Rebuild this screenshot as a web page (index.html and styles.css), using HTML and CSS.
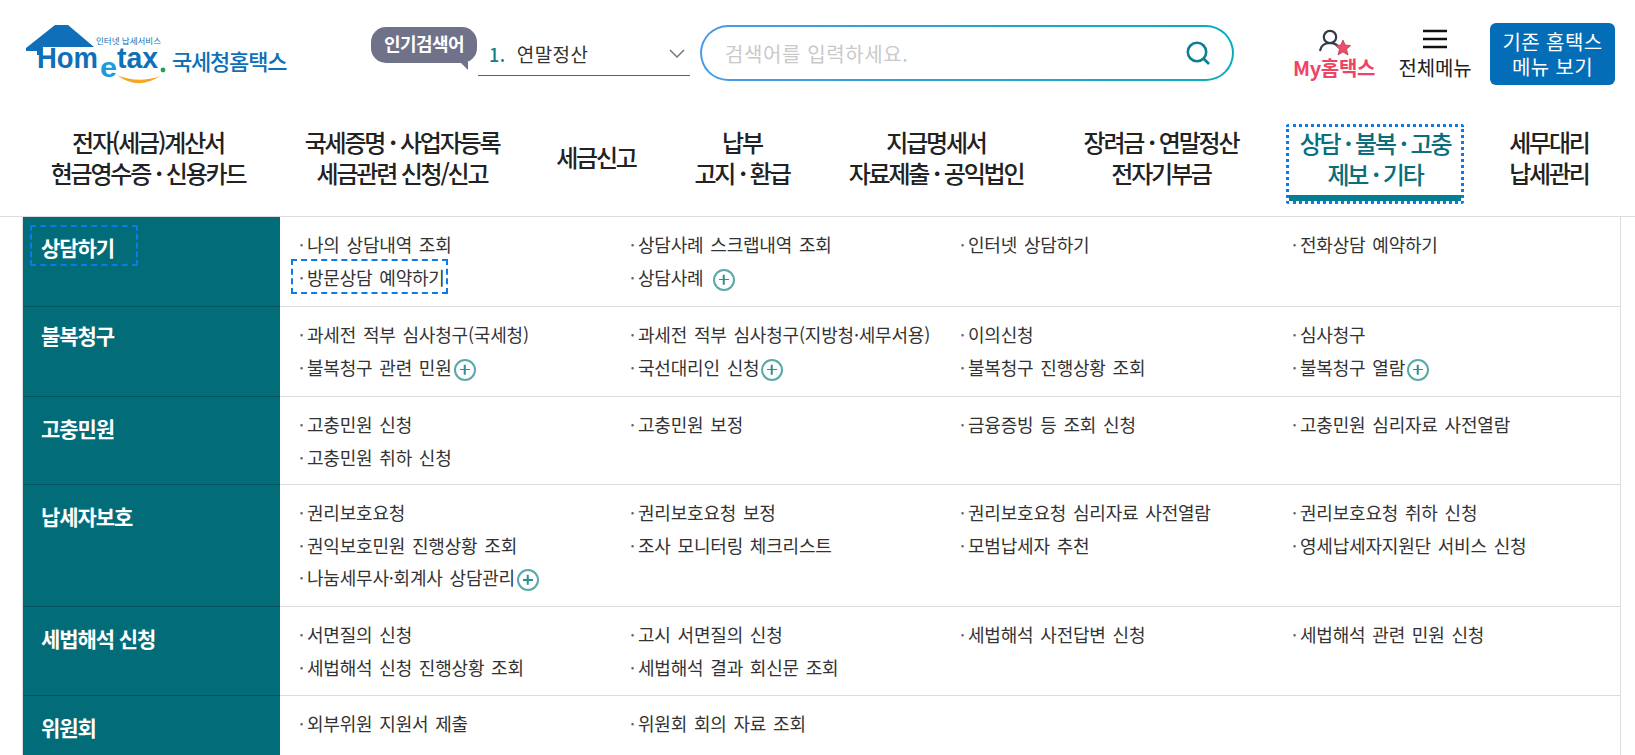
FILE: index.html
```html
<!DOCTYPE html>
<html lang="ko">
<head>
  <meta charset="UTF-8" />
  <meta name="viewport" content="width=device-width, initial-scale=1.0" />
  <title>국세청 홈택스</title>
  <link rel="stylesheet" href="styles.css">
</head>
<body>
  <div class="top-bar">
    <a class="logo" href="#">
      <svg class="logo-mark" width="146" height="64" viewBox="0 0 146 64">
        <path d="M1 24 L30 1 L43 1 L69 23 L18 23 L17 31 L12 31 L12 27 L1 27 Z" fill="#0f6fb8"/>
        <path d="M92 51 Q113 67 135 52 Q113 60 92 51 Z" fill="#f5a623"/>
        <text class="logo-small" x="71" y="20" textLength="65" lengthAdjust="spacingAndGlyphs">인터넷 납세서비스</text>
        <text class="logo-word" x="12" y="44" textLength="61" lengthAdjust="spacingAndGlyphs">Hom</text>
        <text class="logo-e" x="75" y="53" textLength="17" lengthAdjust="spacingAndGlyphs">e</text>
        <text class="logo-word" x="92" y="44" textLength="41" lengthAdjust="spacingAndGlyphs">tax</text>
        <circle cx="138" cy="46" r="2.4" fill="#1fa34a"/>
      </svg>
      <span class="logo-name">국세청홈택스</span>
    </a>

    <div class="popular">
      <span class="popular-badge">인기검색어</span>
      <div class="popular-select">
        <span><b>1.</b>연말정산</span>
        <svg width="18" height="10" viewBox="0 0 18 10"><path d="M2 1 L9 8 L16 1" fill="none" stroke="#777" stroke-width="1.5"/></svg>
      </div>
    </div>

    <div class="search-box">
      <div class="search-inner">
        <span class="search-hint">검색어를 입력하세요.</span>
        <svg width="26" height="26" viewBox="0 0 26 26"><circle cx="12" cy="12" r="9.2" fill="none" stroke="#0e7f92" stroke-width="2.6"/><path d="M18.5 18.5 L24 24" stroke="#0e7f92" stroke-width="2.6"/></svg>
      </div>
    </div>

    <div class="util">
      <a class="util-item my" href="#">
        <svg width="36" height="30" viewBox="0 0 36 30">
          <circle cx="14" cy="11" r="6.2" fill="none" stroke="#333b4a" stroke-width="2.2"/>
          <path d="M4 25 C5 19 9 17 14 17 C17 17 20 18 22 20" fill="none" stroke="#333b4a" stroke-width="2.2"/>
          <path d="M27 14 L29.2 19 L34.6 19.6 L30.6 23.2 L32 29 L27 26 L22 29 L23.4 23.2 L19.4 19.6 L24.8 19 Z" fill="#ee4d6b" stroke="#a83a4e" stroke-width=".7"/>
        </svg>
        <span>My홈택스</span>
      </a>
      <a class="util-item all" href="#">
        <svg width="26" height="20" viewBox="0 0 26 20"><path d="M1 2 H25 M1 10 H25 M1 18 H25" stroke="#111" stroke-width="2.4"/></svg>
        <span>전체메뉴</span>
      </a>
      <a class="old-btn" href="#">기존 홈택스<br>메뉴 보기</a>
    </div>
  </div>

  <nav class="gnb">
    <a class="gnb-item w1" href="#">전자(세금)계산서<br>현금영수증<span class="dot">·</span>신용카드</a>
    <a class="gnb-item w2" href="#">국세증명<span class="dot">·</span>사업자등록<br>세금관련 신청/신고</a>
    <a class="gnb-item w3" href="#">세금신고</a>
    <a class="gnb-item w4" href="#">납부<br>고지<span class="dot">·</span>환급</a>
    <a class="gnb-item w5" href="#">지급명세서<br>자료제출<span class="dot">·</span>공익법인</a>
    <a class="gnb-item w6" href="#">장려금<span class="dot">·</span>연말정산<br>전자기부금</a>
    <a class="gnb-item w7 active" href="#">상담<span class="dot">·</span>불복<span class="dot">·</span>고충<br>제보<span class="dot">·</span>기타</a>
    <a class="gnb-item w8" href="#">세무대리<br>납세관리</a>
  </nav>

  <div class="menu-wrap">
    <div class="menu">
      <div class="menu-row r1">
        <div class="menu-head first"><span class="focused">상담하기</span></div>
        <ul class="menu-list">
          <li>나의 상담내역 조회</li>
          <li>상담사례 스크랩내역 조회</li>
          <li>인터넷 상담하기</li>
          <li>전화상담 예약하기</li>
          <li class="focused-link">방문상담 예약하기</li>
          <li>상담사례 <i class="plus wide"></i></li>
        </ul>
      </div>
      <div class="menu-row r2">
        <div class="menu-head"><span>불복청구</span></div>
        <ul class="menu-list">
          <li>과세전 적부 심사청구(국세청)</li>
          <li>과세전 적부 심사청구(지방청·세무서용)</li>
          <li>이의신청</li>
          <li>심사청구</li>
          <li>불복청구 관련 민원<i class="plus"></i></li>
          <li>국선대리인 신청<i class="plus"></i></li>
          <li>불복청구 진행상황 조회</li>
          <li>불복청구 열람<i class="plus"></i></li>
        </ul>
      </div>
      <div class="menu-row r3">
        <div class="menu-head"><span>고충민원</span></div>
        <ul class="menu-list">
          <li>고충민원 신청</li>
          <li>고충민원 보정</li>
          <li>금융증빙 등 조회 신청</li>
          <li>고충민원 심리자료 사전열람</li>
          <li>고충민원 취하 신청</li>
        </ul>
      </div>
      <div class="menu-row r4">
        <div class="menu-head"><span>납세자보호</span></div>
        <ul class="menu-list">
          <li>권리보호요청</li>
          <li>권리보호요청 보정</li>
          <li>권리보호요청 심리자료 사전열람</li>
          <li>권리보호요청 취하 신청</li>
          <li>권익보호민원 진행상황 조회</li>
          <li>조사 모니터링 체크리스트</li>
          <li>모범납세자 추천</li>
          <li>영세납세자지원단 서비스 신청</li>
          <li>나눔세무사·회계사 상담관리<i class="plus"></i></li>
        </ul>
      </div>
      <div class="menu-row">
        <div class="menu-head"><span>세법해석 신청</span></div>
        <ul class="menu-list">
          <li>서면질의 신청</li>
          <li>고시 서면질의 신청</li>
          <li>세법해석 사전답변 신청</li>
          <li>세법해석 관련 민원 신청</li>
          <li>세법해석 신청 진행상황 조회</li>
          <li>세법해석 결과 회신문 조회</li>
        </ul>
      </div>
      <div class="menu-row">
        <div class="menu-head"><span>위원회</span></div>
        <ul class="menu-list">
          <li>외부위원 지원서 제출</li>
          <li>위원회 회의 자료 조회</li>
        </ul>
      </div>
    </div>
  </div>
</body>
</html>
```

FILE: styles.css
```css
* {
  box-sizing: border-box;
}
html, body {
  height: 755px;
  overflow: hidden;
}
body {
  margin: 0;
  background: #fff;
  color: #222;
  font-family: "Noto Sans CJK KR", "Noto Sans", sans-serif;
}
a {
  color: inherit;
  text-decoration: none;
}

/* top bar */
.top-bar {
  height: 110px;
  display: flex;
  align-items: flex-start;
  padding: 24px 0 0 25px;
}
.logo {
  width: 346px;
  height: 64px;
  display: flex;
  align-items: flex-start;
  flex: none;
}
.logo-mark {
  flex: none;
}
.logo-small {
  font-size: 8px;
  fill: #0f6fb8;
}
.logo-word {
  font-family: "Liberation Sans", sans-serif;
  font-size: 29px;
  font-weight: 700;
  fill: #0f6fb8;
}
.logo-e {
  font-family: "Liberation Sans", sans-serif;
  font-size: 28px;
  font-weight: 700;
  fill: #1b9bd7;
}
.logo-name {
  margin: 20px 0 0 1px;
  font-size: 22px;
  font-weight: 500;
  letter-spacing: -1.2px;
  color: #0f6fb8;
  white-space: nowrap;
}
.popular {
  width: 319px;
  flex: none;
  display: flex;
  align-items: flex-start;
}
.popular-badge {
  width: 106px;
  height: 36px;
  flex: none;
  margin-top: 3px;
  position: relative;
  border-radius: 15px;
  background: #6f7289;
  color: #fff;
  font-size: 18px;
  font-weight: 700;
  letter-spacing: -.6px;
  line-height: 33px;
  text-align: center;
}
.popular-badge::after {
  content: "";
  position: absolute;
  right: 9px;
  bottom: -7px;
  border-left: 8px solid transparent;
  border-top: 8px solid #6f7289;
}
.popular-select {
  flex: 1;
  margin: 12px 0 0 1px;
  height: 40px;
  display: flex;
  justify-content: space-between;
  align-items: center;
  padding: 0 4px 4px 11px;
  border-bottom: 1px solid #0e7f92;
  font-size: 19px;
  letter-spacing: .5px;
  color: #333;
}
.popular-select b {
  color: #0e7f92;
  font-size: 18px;
  font-weight: 500;
  margin-right: 11px;
}
.search-box {
  width: 534px;
  height: 56px;
  flex: none;
  margin: 1px 0 0 10px;
  padding: 2px;
  border-radius: 28px;
  background: linear-gradient(90deg, #4a9be8, #06aebd);
}
.search-inner {
  height: 100%;
  border-radius: 26px;
  background: #fff;
  display: flex;
  justify-content: space-between;
  align-items: center;
  padding: 0 21px 0 23px;
}
.search-hint {
  color: #c9c9c9;
  font-size: 20px;
  letter-spacing: .6px;
}
.util {
  display: flex;
  margin-left: 58px;
}
.util-item {
  display: flex;
  flex-direction: column;
  align-items: center;
  font-size: 20px;
  line-height: 26px;
  white-space: nowrap;
}
.util-item.my {
  width: 84px;
  color: #ee4466;
  font-weight: 700;
  letter-spacing: -.3px;
  padding-top: 2px;
}
.util-item.my span {
  margin-top: -1px;
}
.util-item.all {
  width: 80px;
  margin-left: 19px;
  padding-top: 5px;
  color: #222;
  letter-spacing: -.1px;
}
.util-item.all span {
  margin-top: 6px;
}
.old-btn {
  width: 125px;
  height: 62px;
  margin: -1px 0 0 15px;
  border-radius: 6px;
  background: #036db8;
  color: #fff;
  font-size: 20px;
  letter-spacing: .4px;
  line-height: 25px;
  text-align: center;
  padding-top: 6px;
}

/* main nav */
.gnb {
  height: 106px;
  display: flex;
  align-items: flex-start;
  padding: 14px 0 0 0;
}
.gnb-item {
  height: 80px;
  display: block;
  text-align: center;
  font-size: 24px;
  font-weight: 500;
  letter-spacing: -2.2px;
  line-height: 31px;
  color: #222;
  flex: none;
  white-space: nowrap;
  padding-top: 2px;
}
.gnb-item .dot {
  font-weight: 700;
  margin: 0 5px;
}
.w1 { width: 272px; margin-left: 12px; }
.w2 { width: 236px; }
.w3 { width: 152px; padding-top: 17px; }
.w4 { width: 140px; }
.w5 { width: 248px; }
.w6 { width: 202px; }
.w7 { width: 178px; margin-left: 24px; }
.w8 { width: 170px; }
.gnb-item.active {
  color: #0a6e7c;
  border: 3px dotted #0a7be8;
  border-radius: 3px;
  position: relative;
  padding-top: 0;
}
.gnb-item.active::after {
  content: "";
  position: absolute;
  left: 0;
  right: 0;
  bottom: 0;
  height: 6px;
  background: #037f93;
}

/* menu table */
.menu-wrap {
  border-top: 1px solid #ddd;
  padding: 0 14px 0 22px;
}
.menu {
  border-left: 1px solid #ddd;
  border-right: 1px solid #ddd;
}
.menu-row {
  height: 89px;
  display: flex;
  border-bottom: 1px solid #ddd;
}
.menu-row.r1 { height: 90px; }
.menu-row.r2 { height: 90px; }
.menu-row.r3 { height: 88px; }
.menu-row.r4 { height: 122px; }
.menu-row:last-child { height: 90px; }
.menu-head {
  width: 257px;
  flex: none;
  background: #036c79;
  border-bottom: 1px solid #02545e;
  margin-bottom: -1px;
  color: #fff;
  font-size: 21px;
  font-weight: 700;
  letter-spacing: -1.1px;
  line-height: 30px;
  padding: 16px 0 0 18px;
}
.menu-head.first {
  padding-top: 15px;
}
.r2 .menu-head {
  padding-top: 13px;
}
.menu-head .focused {
  display: inline-block;
  position: relative;
}
.menu-head .focused::before {
  content: "";
  position: absolute;
  left: -11px;
  right: -24px;
  top: -7px;
  bottom: -4px;
  border: 2px dashed #0a7be8;
  border-radius: 2px;
}
.menu-list {
  flex: 1;
  margin: 0;
  padding: 11px 0 0 19px;
  list-style: none;
  display: grid;
  grid-template-columns: 331px 330px 332px 1fr;
  grid-auto-rows: 32.5px;
  align-content: start;
  font-size: 18px;
  letter-spacing: -.2px;
  word-spacing: 2px;
  color: #333;
}
.menu-list li {
  display: flex;
  align-items: center;
  white-space: pre;
}
.menu-list li::before {
  content: "·";
  width: 8px;
  color: #666;
}
.focused-link {
  justify-self: start;
  align-self: center;
  height: 31px;
  margin-left: -6px;
  padding: 0 1px 0 6px;
  outline: 2px dashed #0a7be8;
  outline-offset: 0;
}
.plus {
  display: inline-block;
  width: 22px;
  height: 22px;
  margin: 6px 0 0 2px;
  border: 2px solid #5aa8a8;
  border-radius: 50%;
  position: relative;
}
.plus.wide {
  margin-left: 3px;
}
.plus::before, .plus::after {
  content: "";
  position: absolute;
  background: #2b8f93;
  left: 4px;
  top: 8px;
  width: 10px;
  height: 1.5px;
}
.plus::after {
  transform: rotate(90deg);
}
```
